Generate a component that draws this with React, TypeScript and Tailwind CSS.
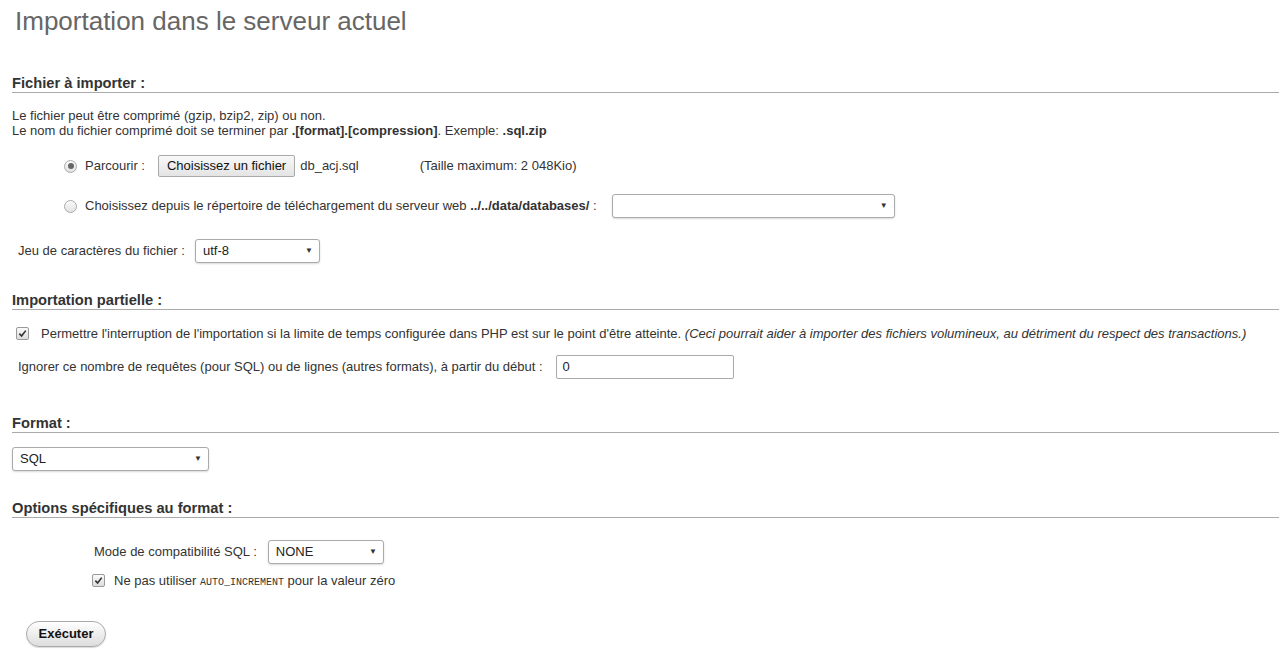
import React from 'react';

const Heading: React.FC<{ children: React.ReactNode }> = ({ children }) => (
  <div className="border-b border-[#aaa] text-[14.7px] font-bold text-[#333] leading-[17px]">{children}</div>
);

const Arrow = () => <span className="text-[8px] text-[#333]">▼</span>;

const SelectBox: React.FC<{ value?: string; className: string }> = ({ value, className }) => (
  <div
    className={`flex items-center justify-between h-[24px] border border-[#aaa] rounded-[3px] bg-white shadow-[0_1px_2px_rgba(0,0,0,0.15)] pl-[7px] pr-[6px] text-[13px] text-[#222] ${className}`}
  >
    <span>{value}</span>
    <Arrow />
  </div>
);

const Radio: React.FC<{ checked?: boolean }> = ({ checked }) => (
  <span className="inline-flex items-center justify-center w-[13px] h-[13px] rounded-full border border-[#aaa] bg-gradient-to-b from-[#fafafa] to-[#e2e2e2]">
    {checked && <span className="w-[6px] h-[6px] rounded-full bg-[#666]" />}
  </span>
);

const Check = () => (
  <span className="inline-flex items-center justify-center w-[13px] h-[13px] rounded-[2px] border border-[#999] bg-gradient-to-b from-[#fafafa] to-[#ddd]">
    <svg width="9" height="9" viewBox="0 0 10 10">
      <path d="M1.5 5.2 L4 7.8 L8.6 1.8" fill="none" stroke="#333" strokeWidth="1.8" />
    </svg>
  </span>
);

export default function App() {
  return (
    <div className="w-[1279px] h-[664px] bg-white font-['Liberation_Sans',Arial,sans-serif] text-[13px] text-[#333] overflow-hidden">
      <h1 className="pl-[15px] pt-[6px] text-[26px] leading-[30px] text-[#666]">Importation dans le serveur actuel</h1>

      <div className="pl-[12px]">
        <div className="mt-[39px]">
          <Heading>Fichier à importer :</Heading>
        </div>
        <div className="mt-[15px] leading-[15px]">
          <div>Le fichier peut être comprimé (gzip, bzip2, zip) ou non.</div>
          <div>
            Le nom du fichier comprimé doit se terminer par <b>.[format].[compression]</b>. Exemple: <b>.sql.zip</b>
          </div>
        </div>

        <div className="flex items-center h-[24px] mt-[16px] pl-[52px]">
          <Radio checked />
          <span className="ml-[8px]">Parcourir :</span>
          <div className="ml-[13px] h-[22px] px-[8px] flex items-center border border-[#a9a9a9] rounded-[2px] bg-gradient-to-b from-[#f8f8f8] to-[#e4e4e4] text-[#111]">
            Choisissez un fichier
          </div>
          <span className="ml-[5px]">db_acj.sql</span>
          <span className="ml-[61px]">(Taille maximum: 2 048Kio)</span>
        </div>

        <div className="flex items-center h-[24px] mt-[16px] pl-[52px]">
          <Radio />
          <span className="ml-[8px]">
            Choisissez depuis le répertoire de téléchargement du serveur web <b>../../data/databases/</b> :
          </span>
          <SelectBox className="ml-[15px] w-[283px]" />
        </div>

        <div className="flex items-center h-[24px] mt-[21px] pl-[6px]">
          <span>Jeu de caractères du fichier :</span>
          <SelectBox value="utf-8" className="ml-[10px] w-[125px]" />
        </div>

        <div className="mt-[29px]">
          <Heading>Importation partielle :</Heading>
        </div>

        <div className="flex items-center mt-[16px] pl-[4px] h-[15px]">
          <Check />
          <span className="ml-[12px]">
            Permettre l'interruption de l'importation si la limite de temps configurée dans PHP est sur le point d'être atteinte.{' '}
            <i>(Ceci pourrait aider à importer des fichiers volumineux, au détriment du respect des transactions.)</i>
          </span>
        </div>

        <div className="flex items-center h-[24px] mt-[14px] pl-[6px]">
          <span>Ignorer ce nombre de requêtes (pour SQL) ou de lignes (autres formats), à partir du début :</span>
          <div className="ml-[13px] w-[178px] h-[24px] border border-[#aaa] rounded-[2px] flex items-center pl-[6px] text-[#222]">0</div>
        </div>

        <div className="mt-[36px]">
          <Heading>Format :</Heading>
        </div>
        <SelectBox value="SQL" className="mt-[14px] w-[197px]" />

        <div className="mt-[29px]">
          <Heading>Options spécifiques au format :</Heading>
        </div>

        <div className="flex items-center h-[24px] mt-[22px] pl-[82px]">
          <span>Mode de compatibilité SQL :</span>
          <SelectBox value="NONE" className="ml-[11px] w-[116px]" />
        </div>

        <div className="flex items-center mt-[9px] pl-[80px] h-[15px]">
          <Check />
          <span className="ml-[9px]">
            Ne pas utiliser <span className="font-['Liberation_Mono',monospace] text-[10px]">AUTO_INCREMENT</span> pour la valeur zéro
          </span>
        </div>

        <div className="mt-[33px] pl-[14px]">
          <button className="h-[26px] w-[80px] rounded-full border border-[#aaa] bg-gradient-to-b from-white to-[#ddd] text-[13px] font-bold text-[#111] shadow-[0_1px_1px_rgba(0,0,0,0.15)]">
            Exécuter
          </button>
        </div>
      </div>
    </div>
  );
}
